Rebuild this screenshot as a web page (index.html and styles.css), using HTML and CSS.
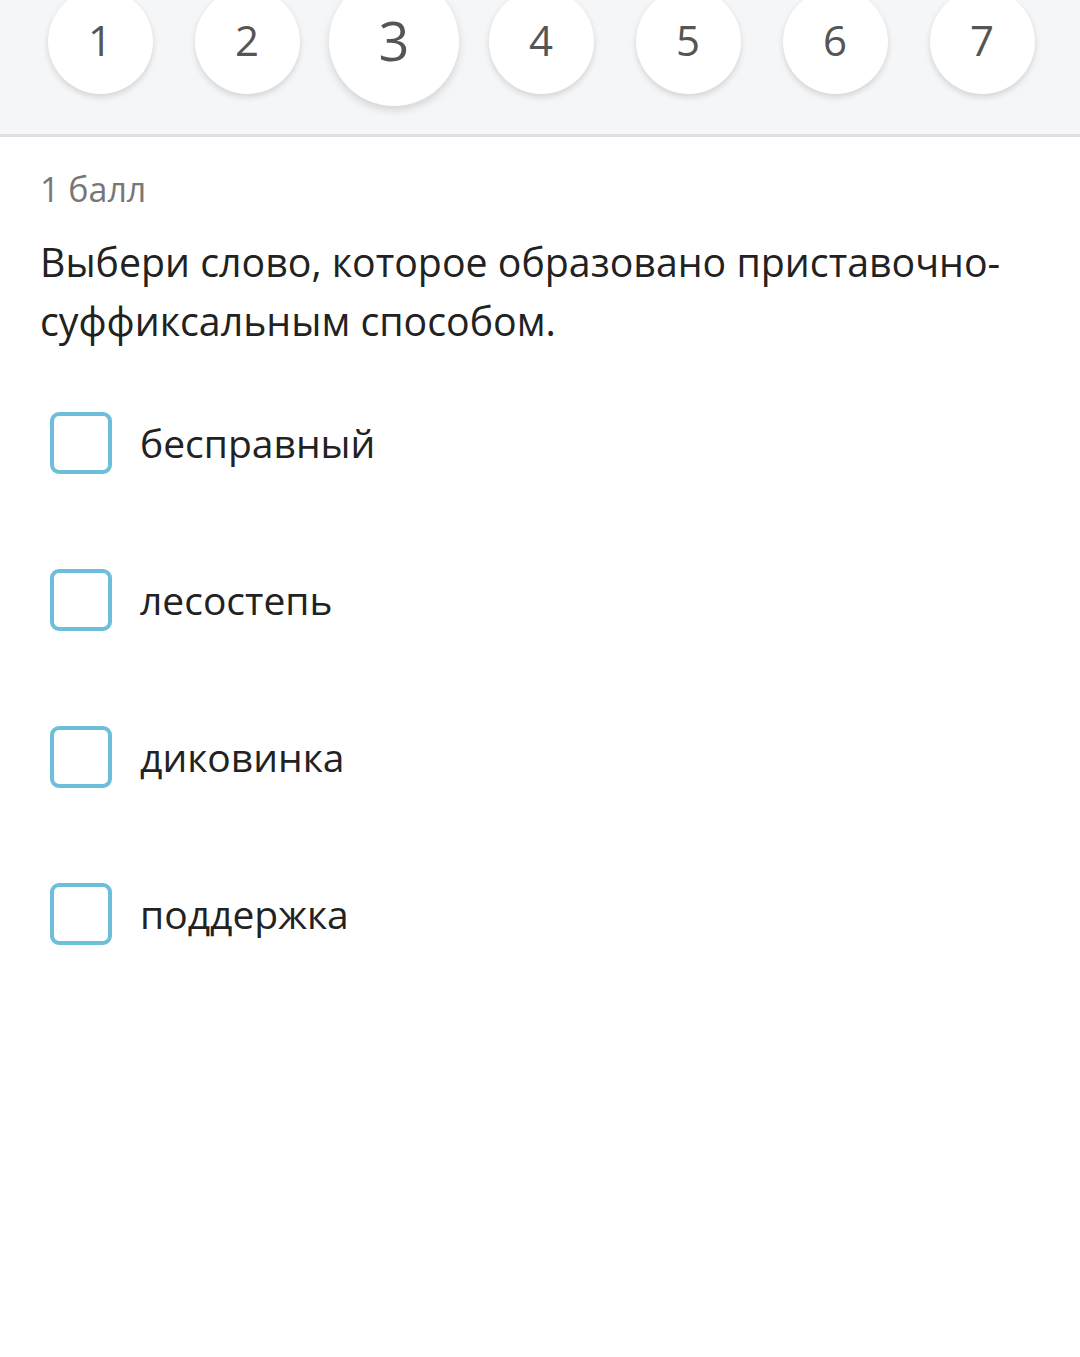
FILE: index.html
```html
<!DOCTYPE html>
<html lang="ru">
<head>
<meta charset="utf-8">
<link rel="stylesheet" href="styles.css">
</head>
<body>
<header class="nav">
  <div class="steps">
    <div class="slot"><div class="step">1</div></div>
    <div class="slot"><div class="step">2</div></div>
    <div class="slot"><div class="step active">3</div></div>
    <div class="slot"><div class="step">4</div></div>
    <div class="slot"><div class="step">5</div></div>
    <div class="slot"><div class="step">6</div></div>
    <div class="slot"><div class="step">7</div></div>
  </div>
</header>
<main class="content">
  <div class="points">1 балл</div>
  <p class="question">Выбери слово, которое образовано приставочно-суффиксальным способом.</p>
  <ul class="options">
    <li class="option"><span class="box"></span><span class="label">бесправный</span></li>
    <li class="option"><span class="box"></span><span class="label">лесостепь</span></li>
    <li class="option"><span class="box"></span><span class="label">диковинка</span></li>
    <li class="option"><span class="box"></span><span class="label">поддержка</span></li>
  </ul>
</main>
</body>
</html>
```
FILE: styles.css
```css
* { box-sizing: border-box; }
html, body { margin: 0; padding: 0; background: #fff; }
body { font-family: "Open Sans", "Noto Sans", sans-serif; color: #222; width: 1080px; height: 1357px; overflow: hidden; }

.nav {
  background: #f5f6f8;
  height: 137px;
  border-bottom: 3px solid #dfe0e3;
  overflow: hidden;
}
.steps {
  display: flex;
  justify-content: center;
  height: 134px;
  padding-left: 2px;
}
.slot {
  width: 147px;
  height: 82px;
  display: flex;
  align-items: center;
  justify-content: center;
}
.step {
  flex: none;
  width: 105px;
  height: 105px;
  border-radius: 50%;
  background: #fff;
  box-shadow: 0 3px 6px rgba(0,0,0,0.14);
  display: flex;
  align-items: center;
  justify-content: center;
  font-size: 42px;
  color: #555;
  line-height: 1;
  padding-bottom: 2px;
}
.step.active {
  width: 130px;
  height: 130px;
  font-size: 54px;
  box-shadow: 0 4px 8px rgba(0,0,0,0.14);
}

.content { padding: 0 40px; }
.points {
  margin-top: 30px;
  font-size: 34px;
  color: #777;
  line-height: 44px;
}
.question {
  margin: 22px 0 0;
  font-size: 39.3px;
  line-height: 59px;
  color: #222;
}
.options {
  list-style: none;
  margin: 61px 0 0;
  padding: 0 0 0 10px;
  display: flex;
  flex-direction: column;
  gap: 95px;
}
.option {
  display: flex;
  align-items: center;
  gap: 28px;
  height: 62px;
}
.box {
  width: 62px;
  height: 62px;
  border: 4px solid #6cbedb;
  border-radius: 9px;
  flex: none;
}
.label {
  font-size: 39px;
  color: #222;
  line-height: 1;
  padding-bottom: 2px;
}
```
